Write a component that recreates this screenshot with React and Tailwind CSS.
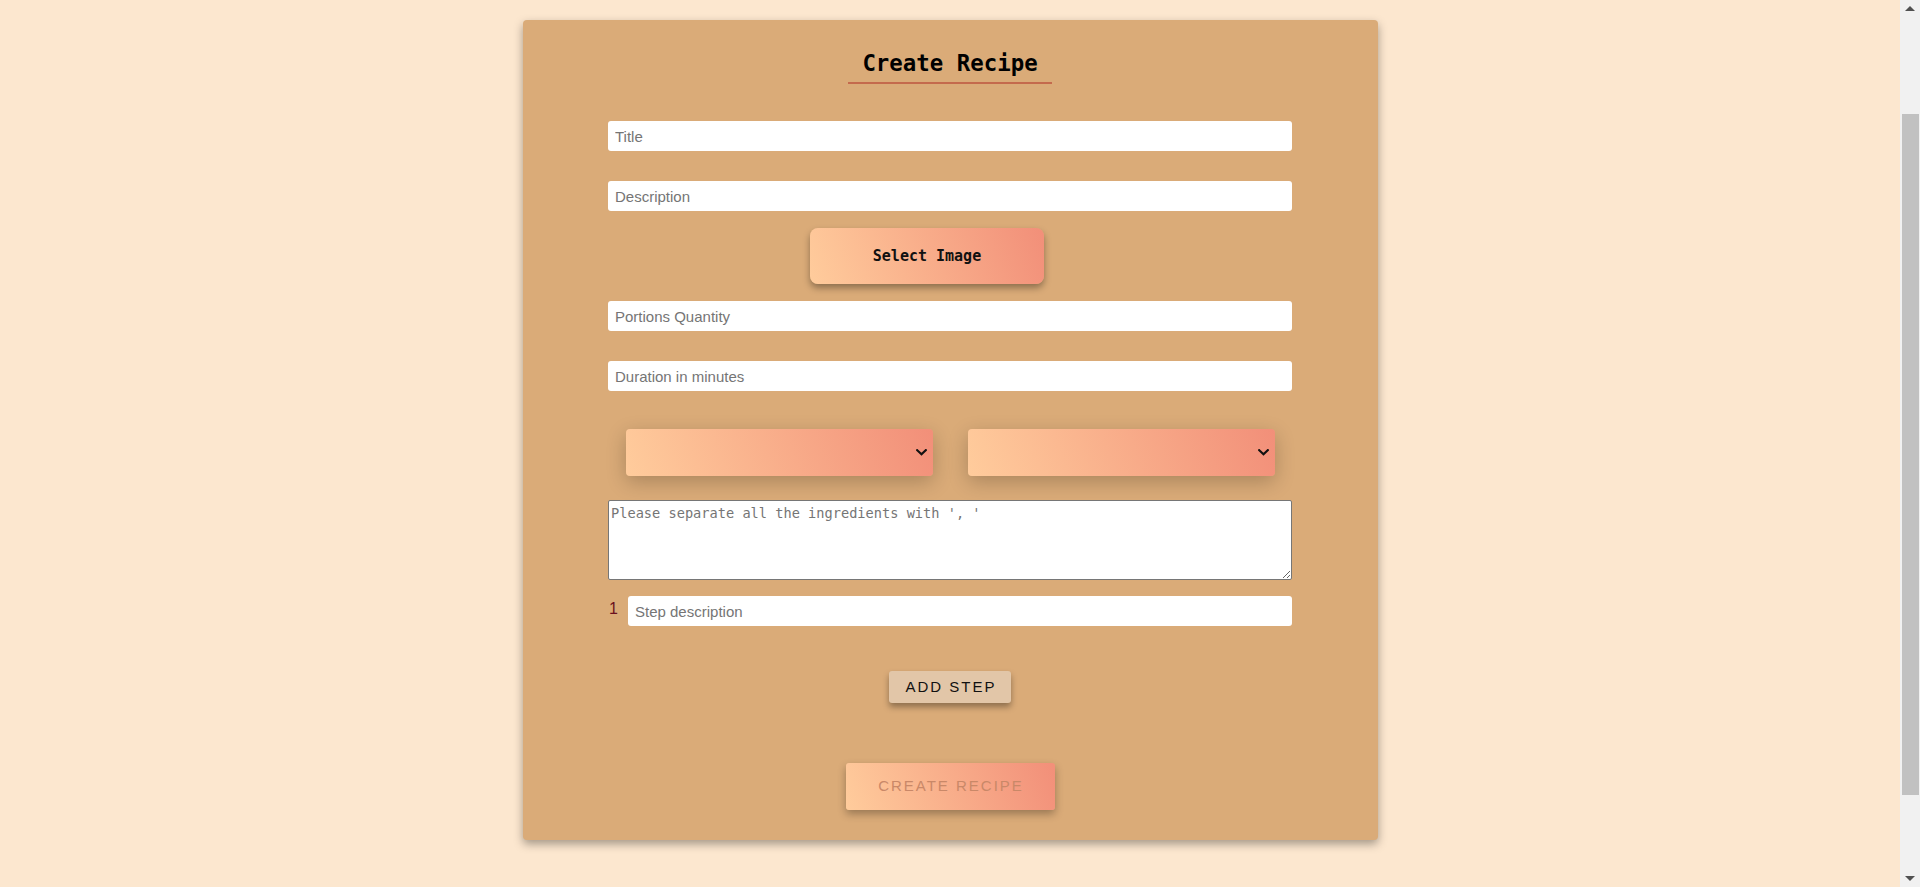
import React from "react";

const sans = { fontFamily: '"Liberation Sans", Arial, sans-serif' };
const mono = { fontFamily: '"DejaVu Sans Mono", "Liberation Mono", monospace' };

function Field({ placeholder, className = "" }) {
  return (
    <input
      placeholder={placeholder}
      style={sans}
      className={`block h-[30px] w-full rounded-[3px] bg-white pl-[7px] text-[15px] text-black outline-none placeholder:text-[#757575] ${className}`}
    />
  );
}

function Chevron() {
  return (
    <svg width="11" height="7" viewBox="0 0 11 7" fill="none">
      <path d="M1.2 1.2 L5.5 5.3 L9.8 1.2" stroke="#111" strokeWidth="2.2" strokeLinecap="square" />
    </svg>
  );
}

function FakeSelect() {
  return (
    <div className="flex h-[47px] w-[307px] items-center justify-end rounded-[4px] bg-[linear-gradient(70deg,#ffcc9c,#f28f79)] pr-[6px] shadow-[0_6px_20px_rgba(0,0,0,0.22)]">
      <Chevron />
    </div>
  );
}

export default function App() {
  return (
    <div className="flex h-[887px] w-full overflow-hidden bg-[#fce7cf]">
      <div className="min-w-0 flex-1">
        <div className="mx-auto mt-[20px] flex w-[45%] flex-col items-center rounded-[4px] bg-[#daab78] pt-[30px] pb-[30px] shadow-[0_4px_10px_rgba(0,0,0,0.35)]">
          <h2
            style={mono}
            className="border-b-2 border-[#c46a4d] px-[14px] pb-[6px] text-[22.4px] leading-[26px] font-bold text-black"
          >
            Create Recipe
          </h2>
          <div className="mt-[37px] flex w-[80%] flex-col">
            <Field placeholder="Title" />
            <Field placeholder="Description" className="mt-[30px]" />
            <button
              style={mono}
              className="mt-[17px] ml-[202px] h-[56px] w-[234px] rounded-[8px] bg-[linear-gradient(70deg,#ffcc9c,#f28f79)] text-[15px] font-bold text-[#111] shadow-[0_4px_7px_rgba(0,0,0,0.35)]"
            >
              Select Image
            </button>
            <Field placeholder="Portions Quantity" className="mt-[17px]" />
            <Field placeholder="Duration in minutes" className="mt-[30px]" />
            <div className="mt-[38px] flex justify-around">
              <FakeSelect />
              <FakeSelect />
            </div>
            <textarea
              placeholder="Please separate all the ingredients with ', '"
              style={mono}
              className="mt-[24px] block h-[80px] w-full rounded-[2px] border border-[#767676] bg-white p-[2px] text-[13.65px] text-black outline-none placeholder:text-[#757575]"
            />
            <div className="mt-[16px] flex">
              <span style={sans} className="mt-[4px] w-[20px] pl-[1px] text-[16px] leading-[18px] text-[#6b1020]">
                1
              </span>
              <Field placeholder="Step description" className="flex-1" />
            </div>
            <button
              style={sans}
              className="mt-[45px] h-[32px] w-[122px] self-center rounded-[3px] bg-[#e2c6a8] pl-[2px] text-[15px] tracking-[2px] text-[#111] shadow-[0_4px_6px_rgba(0,0,0,0.35)]"
            >
              ADD STEP
            </button>
            <button
              style={sans}
              className="mt-[60px] h-[47px] w-[209px] self-center rounded-[3px] bg-[linear-gradient(70deg,#ffcc9c,#f28f79)] pl-[2px] text-[15px] tracking-[2px] text-[#c98868] shadow-[0_4px_8px_rgba(0,0,0,0.3)]"
            >
              CREATE RECIPE
            </button>
          </div>
        </div>
      </div>
      <div className="flex h-full w-[20px] flex-col bg-[#f1f1f1]">
        <div className="flex h-[17px] items-center justify-center">
          <svg width="10" height="6" viewBox="0 0 10 6">
            <path d="M0 5 L5 0 L10 5 Z" fill="#505050" />
          </svg>
        </div>
        <div className="mt-[97px] ml-[2px] h-[681px] w-[17px] bg-[#c1c1c1]" />
        <div className="flex-1" />
        <div className="flex h-[17px] items-center justify-center">
          <svg width="10" height="6" viewBox="0 0 10 6">
            <path d="M0 0 L10 0 L5 5 Z" fill="#505050" />
          </svg>
        </div>
      </div>
    </div>
  );
}
